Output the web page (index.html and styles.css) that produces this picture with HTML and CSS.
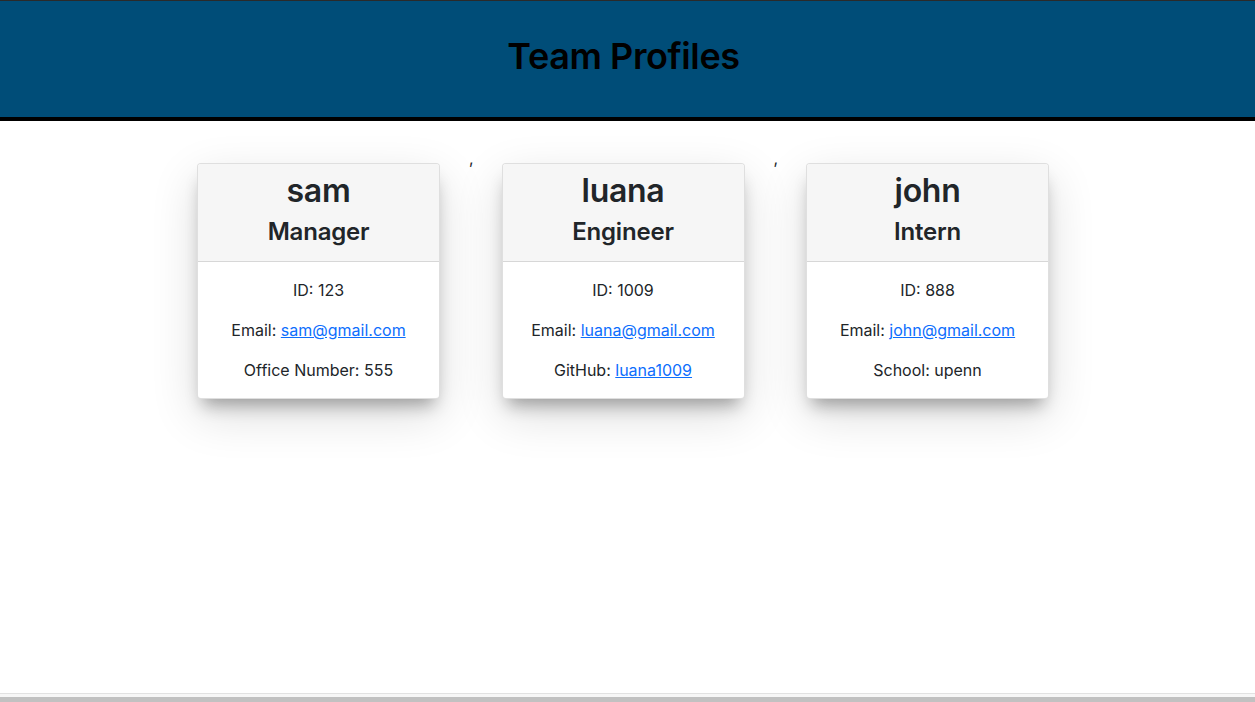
FILE: index.html
```html
<!DOCTYPE html>
<html lang="en">
<head>
<meta charset="utf-8">
<title>Team Profiles</title>
<link rel="stylesheet" href="styles.css">
</head>
<body>
<header class="site-header">
  <h1 class="site-title">Team Profiles</h1>
</header>
<main class="team">
  <div class="card">
    <div class="card-header">
      <h2 class="card-name">sam</h2>
      <h4 class="card-role">Manager</h4>
    </div>
    <div class="card-body">
      <p class="card-line">ID: 123</p>
      <p class="card-line">Email: <a href="#">sam@gmail.com</a></p>
      <p class="card-line">Office Number: 555</p>
    </div>
  </div>
  <span class="sep">,</span>
  <div class="card">
    <div class="card-header">
      <h2 class="card-name">luana</h2>
      <h4 class="card-role">Engineer</h4>
    </div>
    <div class="card-body">
      <p class="card-line">ID: 1009</p>
      <p class="card-line">Email: <a href="#">luana@gmail.com</a></p>
      <p class="card-line">GitHub: <a href="#">luana1009</a></p>
    </div>
  </div>
  <span class="sep">,</span>
  <div class="card">
    <div class="card-header">
      <h2 class="card-name">john</h2>
      <h4 class="card-role">Intern</h4>
    </div>
    <div class="card-body">
      <p class="card-line">ID: 888</p>
      <p class="card-line">Email: <a href="#">john@gmail.com</a></p>
      <p class="card-line">School: upenn</p>
    </div>
  </div>
</main>
<div class="hscroll"><div class="hscroll-thumb"></div></div>
</body>
</html>
```

FILE: styles.css
```css
* { box-sizing: border-box; }
html, body { height: 100%; }
body {
  margin: 0;
  font-family: Inter, "Liberation Sans", Arial, sans-serif;
  font-size: 16px;
  line-height: 1.5;
  color: #212529;
  background: #fff;
  display: flex;
  flex-direction: column;
}
.site-header {
  background: #004d78;
  border-top: 1px solid #2a2a2a;
  border-bottom: 4px solid #000;
  height: 121px;
  display: flex;
  align-items: center;
  justify-content: center;
  padding-right: 8px;
}
.site-title {
  margin: 0 0 4px 0;
  font-size: 36px;
  font-weight: 600;
  color: #000;
  line-height: 1.2;
  letter-spacing: -0.4px;
}
.team {
  flex: 1;
  display: flex;
  align-items: flex-start;
  padding: 25px 0 0 168px;
}
.sep {
  display: block;
  width: 3.5px;
  line-height: 24px;
  color: #212529;
}
.card {
  width: 243px;
  margin: 17px 29px 0;
  background: #fff;
  border: 1px solid rgba(0,0,0,0.125);
  border-radius: 4px;
  box-shadow: 0 12px 16px -6px rgba(0,0,0,0.32), 0 16px 48px rgba(0,0,0,0.14);
  text-align: center;
  overflow: hidden;
}
.card-header {
  background: #f6f6f6;
  border-bottom: 1px solid rgba(0,0,0,0.125);
  padding: 8px 16px 8px;
}
.card-name {
  margin: 0 0 8px;
  font-size: 32px;
  font-weight: 600;
  line-height: 1.2;
  letter-spacing: -0.3px;
}
.card-role {
  margin: 0 0 6px;
  font-size: 24px;
  font-weight: 600;
  line-height: 1.2;
  letter-spacing: -0.2px;
}
.card-body {
  padding: 16px;
}
.card-line {
  margin: 0 0 16px;
  font-size: 16px;
  line-height: 24px;
}
.card-line:last-child { margin-bottom: 0; }
.card-line a { color: #0d6efd; text-decoration: underline; }
.hscroll {
  height: 9px;
  border-top: 1px solid #e2e2e2;
  background: #f7f7f7;
  display: flex;
  flex-direction: column;
  justify-content: flex-end;
}
.hscroll-thumb {
  height: 5px;
  background: #c1c1c1;
}
```
